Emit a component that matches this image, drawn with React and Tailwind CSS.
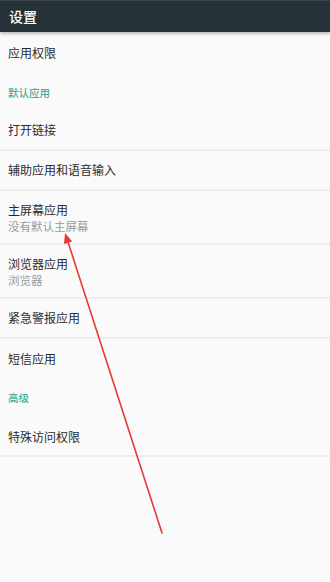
import React from 'react';

const FONT = { fontFamily: '"Noto Sans CJK SC", "Noto Sans", sans-serif' };

const Divider = () => <div className="h-[2px] bg-[#ececec]" />;

const Item = ({ title, sub, h = 'h-[38px]' }) => (
    <div className={`${sub ? '' : h} flex flex-col justify-center px-[8px] ${sub ? 'pt-[11px] pb-[9px]' : ''}`}>
        <div className="text-[12px] leading-[16px] text-[#2b2b2b]">{title}</div>
        {sub && <div className="text-[11.5px] leading-[16px] text-[#9a9a9a]">{sub}</div>}
    </div>
);

const Section = ({ title, h }) => (
    <div className={`${h} flex items-center px-[8px] text-[10.5px] font-medium text-[#3fae9f]`}>{title}</div>
);

const App = () => {
    return (
        <div className="relative w-[330px] h-[582px] overflow-hidden bg-[#fafafa]" style={FONT}>
            {/* 顶栏 */}
            <header className="relative z-10 h-[32px] flex items-center px-[9px] bg-[#263238] border-t border-[#3a464c] shadow-[0_2px_3px_rgba(0,0,0,0.25)]">
                <h1 className="text-[14px] font-medium text-white">设置</h1>
            </header>

            <Item title="应用权限" h="h-[42px]" />
            <Section title="默认应用" h="h-[37px]" />
            <Item title="打开链接" />
            <Divider />
            <Item title="辅助应用和语音输入" />
            <Divider />
            <Item title="主屏幕应用" sub="没有默认主屏幕" />
            <Divider />
            <Item title="浏览器应用" sub="浏览器" />
            <Divider />
            <Item title="紧急警报应用" />
            <Divider />
            <Item title="短信应用" h="h-[39px]" />
            <Section title="高级" h="h-[40px]" />
            <Item title="特殊访问权限" h="h-[37px]" />
            <Divider />

            {/* 红色箭头标注 */}
            <svg className="absolute inset-0 pointer-events-none" width="330" height="582" viewBox="0 0 330 582">
                <line x1="162" y1="533" x2="68" y2="242" stroke="#e53935" strokeWidth="1.6" strokeLinecap="round" />
                <polygon points="65,233 72.2,241.5 64,244" fill="#e53935" />
            </svg>
        </div>
    );
};

export default App;
